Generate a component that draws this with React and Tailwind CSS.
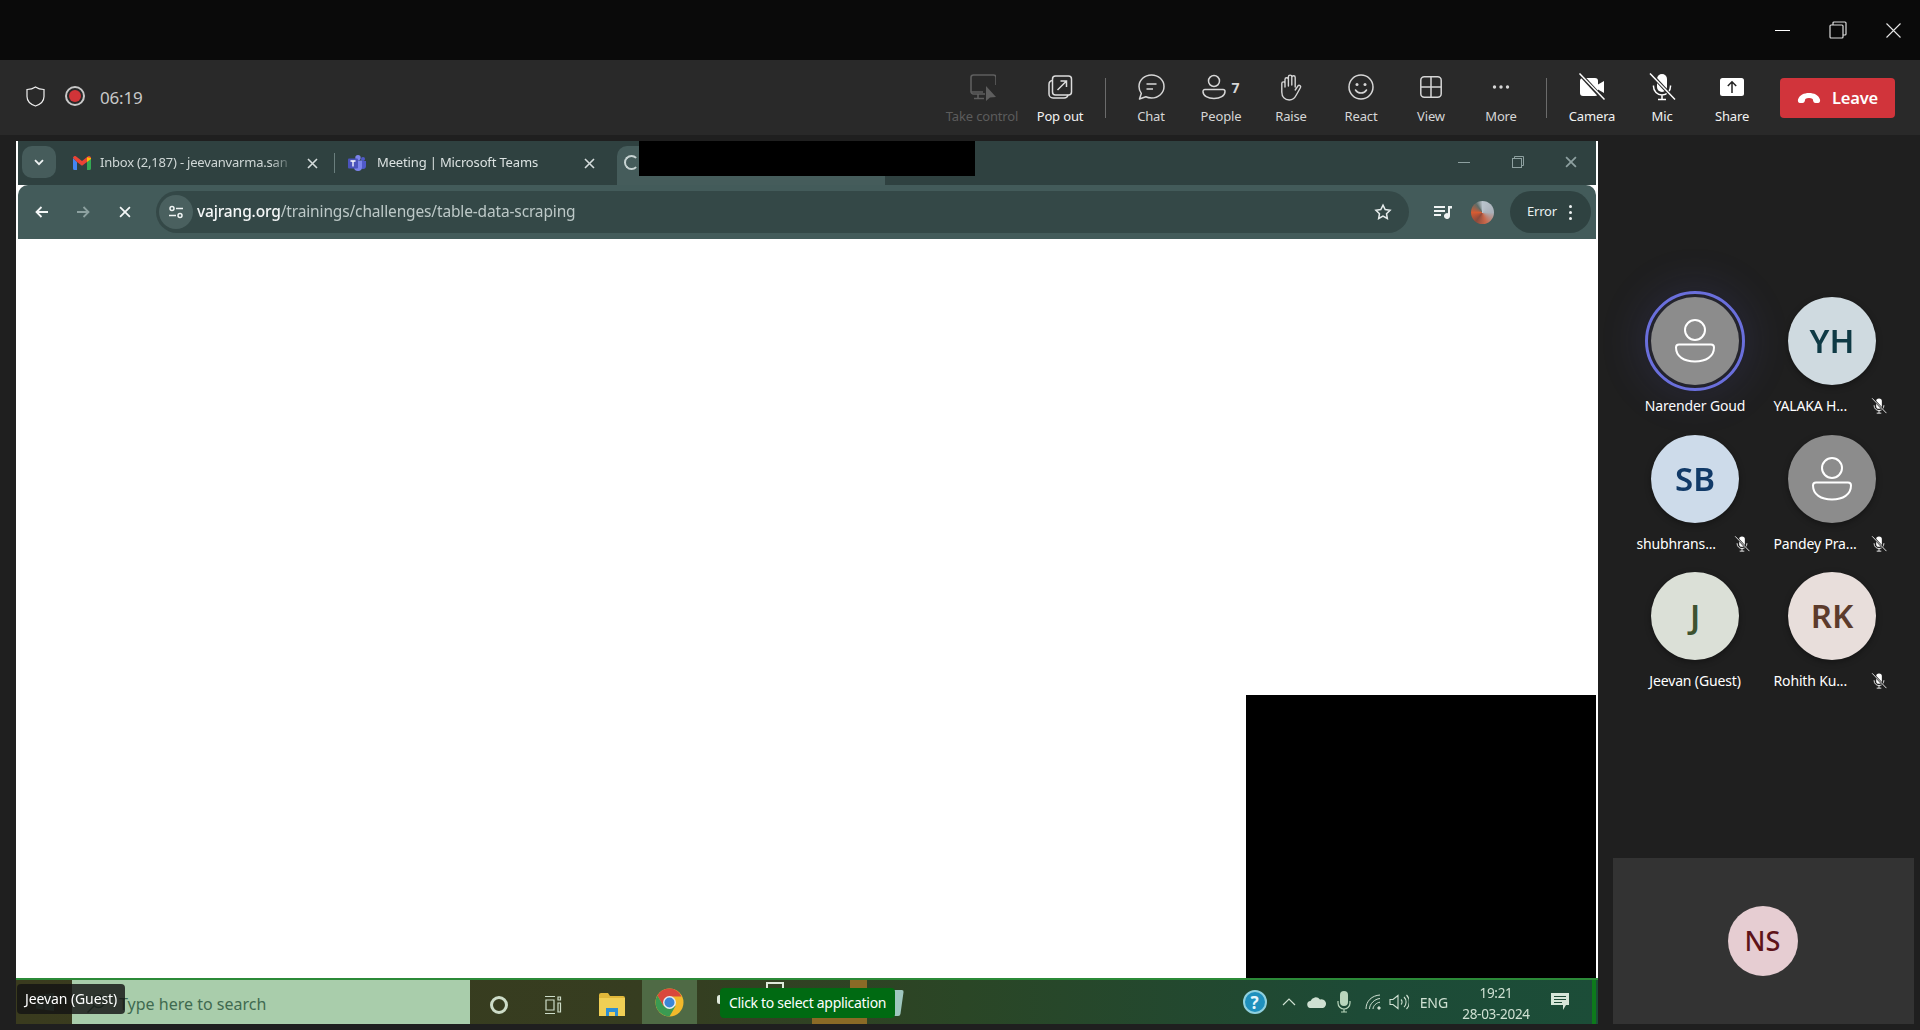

const FONT = { fontFamily: '"Noto Sans", "Open Sans", sans-serif' };

const Svg = ({ s = 28, vb, className = "", children }) => (
  <svg width={s} height={s} viewBox={vb || `0 0 ${s} ${s}`} fill="none" className={className}>{children}</svg>
);

const IconTakeControl = () => (
  <Svg>
    <path d="M17 21H5.500A2.500 2.500 0 0 1 3 18.500V4.500A2.500 2.500 0 0 1 5.500 2h20A2.500 2.500 0 0 1 28 4.500V12" stroke="#5e5e5e" strokeWidth="1.600" />
    <path d="M3 19h12M10 21v4M6 25.500h10" stroke="#5e5e5e" strokeWidth="1.600" />
    <path d="M18 13l10 11-6 .5L18 28z" fill="#5e5e5e" />
  </Svg>
);
const IconPopOut = () => (
  <Svg>
    <rect x="6.500" y="3" width="19" height="19" rx="3" stroke="#dcdcdc" strokeWidth="1.500" />
    <path d="M6.500 7.500A4 4 0 0 0 3 11.500V21a4 4 0 0 0 4 4h11a4 4 0 0 0 4-3.200" stroke="#dcdcdc" strokeWidth="1.500" />
    <path d="M11.500 17l8.500-8.500M14.500 8H20.500V14" stroke="#dcdcdc" strokeWidth="1.500" />
  </Svg>
);
const IconChat = () => (
  <Svg>
    <path d="M14.500 2C21.400 2 27 7 27 13.500S21.400 25 14.500 25c-2 0-4-.4-5.700-1.200L2.500 26l1.800-5.600A11.300 11.300 0 0 1 2 13.500C2 7 7.600 2 14.500 2Z" stroke="#d6d6d6" strokeWidth="1.500" strokeLinejoin="round" />
    <path d="M9.500 11h10M9.500 16h6.500" stroke="#d6d6d6" strokeWidth="1.500" />
  </Svg>
);
const IconPeople = () => (
  <svg width="24" height="26" viewBox="0 0 24 26" fill="none">
    <circle cx="12" cy="7" r="5.500" stroke="#d6d6d6" strokeWidth="1.500" />
    <path d="M3 15.500h18a2 2 0 0 1 2 2c0 4.500-5 7-11 7s-11-2.500-11-7a2 2 0 0 1 2-2Z" stroke="#d6d6d6" strokeWidth="1.500" />
  </svg>
);
const IconHand = () => (
  <Svg>
    <path d="M8 14V6.500a1.700 1.700 0 0 1 3.400 0V13M11.400 12V3.800a1.700 1.700 0 0 1 3.400 0V12M14.800 12V4.500a1.700 1.700 0 0 1 3.400 0V14M8 14v-3.500a1.600 1.600 0 0 0-3.200 0V19c0 5 3 8 7.500 8 3.500 0 5.500-2 7-5l4.200-7.500c.8-1.500-1.300-3-2.500-1.700L18.200 17" stroke="#d6d6d6" strokeWidth="1.400" strokeLinecap="round" strokeLinejoin="round" />
  </Svg>
);
const IconSmile = () => (
  <Svg>
    <circle cx="14" cy="14" r="12" stroke="#d6d6d6" strokeWidth="1.500" />
    <circle cx="10" cy="11.500" r="1.500" fill="#d6d6d6" />
    <circle cx="18" cy="11.500" r="1.500" fill="#d6d6d6" />
    <path d="M8.500 17c1.200 2 3.200 3 5.500 3s4.300-1 5.500-3" stroke="#d6d6d6" strokeWidth="1.500" strokeLinecap="round" />
  </Svg>
);
const IconView = () => (
  <Svg>
    <rect x="3.800" y="3.800" width="20.400" height="20.400" rx="3.500" stroke="#d6d6d6" strokeWidth="1.500" />
    <path d="M14 4v20M4 14h20" stroke="#d6d6d6" strokeWidth="1.500" />
  </Svg>
);
const IconMore = () => (
  <Svg>
    <circle cx="7.500" cy="14" r="1.700" fill="#d6d6d6" />
    <circle cx="14" cy="14" r="1.700" fill="#d6d6d6" />
    <circle cx="20.500" cy="14" r="1.700" fill="#d6d6d6" />
  </Svg>
);
const IconCamera = () => (
  <Svg>
    <rect x="2" y="5" width="18" height="18" rx="3" fill="#fff" />
    <path d="M20 11.500l6-3.500v12l-6-3.500z" fill="#fff" />
    <path d="M2 1l24 26" stroke="#292929" strokeWidth="4" />
    <path d="M1.500 .5l25 26" stroke="#fff" strokeWidth="1.500" />
  </Svg>
);
const MicSlash = ({ s = 28, cut = "#292929" }) => (
  <svg width={s} height={s} viewBox="0 0 28 28" fill="none" className="shrink-0">
    <rect x="9" y="1" width="10" height="18" rx="5" fill="#fff" />
    <path d="M5.500 12.500v1a8.500 8.500 0 0 0 17 0v-1M14 22v4.500M10 26.500h8" stroke="#fff" strokeWidth="1.500" />
    <path d="M3 1l24 26" stroke={cut} strokeWidth="3.500" />
    <path d="M2 .5l25 26" stroke="#fff" strokeWidth="1.500" />
  </svg>
);
const IconShare = () => (
  <Svg>
    <rect x="2" y="5" width="24" height="18" rx="2.500" fill="#fff" />
    <path d="M14 20V9M9.800 13L14 8.800 18.200 13" stroke="#222" strokeWidth="1.500" />
  </Svg>
);
const IconHang = () => (
  <svg width="24" height="12" viewBox="0 0 24 12">
    <path d="M1 7.500C2.500 3 7 1 12 1s9.500 2 11 6.500c.5 1.800-.4 3.500-2 3.500h-2.500c-1.300 0-2-.8-2.300-2l-.5-2c-1-.7-2.200-1-3.700-1s-2.700.3-3.700 1l-.5 2c-.3 1.200-1 2-2.300 2H3C1.400 11 .5 9.300 1 7.500Z" fill="#fff" />
  </svg>
);

const Btn = ({ label, w = "w-[70px]", muted, bright, children }) => (
  <div className={`flex flex-col items-center pt-[13px] ${w}`}>
    <div className="flex h-[28px] items-center justify-center">{children}</div>
    <div className={`mt-[7px] whitespace-nowrap text-[13px] leading-[16px] tracking-[-0.15px] ${muted ? "text-[#5c5c5c]" : bright ? "text-[#f2f2f2]" : "text-[#d6d6d6]"}`}>{label}</div>
  </div>
);

const Divider = ({ className }) => <div className={`mt-[18px] h-[40px] w-px bg-[#6b6b6b] ${className}`} />;

const Person = ({ s = 88 }) => (
  <svg width={s} height={s} viewBox="-44 -44 88 88" fill="none" stroke="#fff" strokeWidth="2">
    <circle cx="0" cy="-11" r="10" />
    <path d="M-16 3.500h32a3 3 0 0 1 3 3c0 9-8 14-19 14s-19-5-19-14a3 3 0 0 1 3-3Z" />
  </svg>
);

const Avatar = ({ bg, color, text, speaking }) => (
  <div className={`relative flex h-[88px] w-[88px] items-center justify-center rounded-full text-[33px] font-semibold ${speaking ? "shadow-[0_0_40px_14px_rgba(91,95,199,0.13)]" : "shadow-[0_2px_6px_rgba(0,0,0,0.35)]"}`} style={{ background: bg, color }}>
    {text || <Person />}
    {speaking && <div className="absolute -inset-[6px] rounded-full border-[3px] border-[#6a6fdc]" />}
  </div>
);

const Cell = ({ name, muted, ...a }) => (
  <div className="flex h-[137.5px] w-[137px] flex-col items-center">
    <Avatar {...a} />
    <div className={`mt-[11px] flex h-[20px] w-full items-center text-[14px] leading-[20px] tracking-[-0.15px] text-white ${muted ? "justify-between pl-[10px] pr-[14px]" : "justify-center"}`}>
      <span className="whitespace-nowrap">{name}</span>
      {muted && <MicSlash s={16} cut="#1f1f1f" />}
    </div>
  </div>
);

const TabX = ({ className, color = "#d5dcdc", s = 11 }) => (
  <svg width={s} height={s} viewBox="0 0 11 11" className={className}>
    <path d="M1 1l9 9M10 1l-9 9" stroke={color} strokeWidth="1.600" />
  </svg>
);

const Gmail = () => (
  <svg width="18" height="14" viewBox="0 0 18 14" className="shrink-0">
    <path d="M0 2v10.500A1.500 1.500 0 0 0 1.500 14H4V6z" fill="#4285f4" />
    <path d="M14 6v8h2.500a1.500 1.500 0 0 0 1.500-1.500V2z" fill="#34a853" />
    <path d="M0 2a2 2 0 0 1 3.200-1.600L9 5l5.800-4.600A2 2 0 0 1 18 2L14 6 9 9.800 4 6z" fill="#ea4335" />
    <path d="M14 1.200 18 2v1l-4 3z" fill="#fbbc04" />
  </svg>
);
const Teams = () => (
  <svg width="18" height="16" viewBox="0 0 18 16" className="shrink-0">
    <circle cx="10" cy="2.700" r="2.700" fill="#7b83eb" />
    <circle cx="15" cy="4" r="2" fill="#5059c9" />
    <path d="M12 6h6v5a3 3 0 0 1-6 0z" fill="#5059c9" />
    <path d="M6 5.500h8V12a4 4 0 0 1-8 0z" fill="#7b83eb" />
    <rect x="0" y="3.500" width="10" height="10" rx="1" fill="#4b53bc" />
    <path d="M2.500 6h5M5 6v5.500" stroke="#fff" strokeWidth="1.300" />
  </svg>
);

const ChromeLogo = () => (
  <svg width="29" height="29" viewBox="-14.500 -14.500 29 29">
    <circle r="14" fill="#f2b92b" />
    <path d="M0-14A14 14 0 0 0-12.100-7L-6 3.500-0-6H12.100A14 14 0 0 0 0-14Z" fill="#d9483b" />
    <path d="M-12.100-7A14 14 0 0 0 0 14L6 3.500H-6Z" fill="#3b9a52" />
    <circle r="6.500" fill="#e9eef0" />
    <circle r="5" fill="#3d86d6" />
  </svg>
);

function ChromeArea() {
  return (
    <div className="relative mx-[2px] w-[1578px] blur-[0.3px]">
      <div className="flex h-[44px] items-start bg-[#2f4140] pt-[5px]">
        <div className="ml-[4px] flex h-[32px] w-[34px] items-center justify-center rounded-[10px] bg-[#465c5b]">
          <svg width="10" height="7" viewBox="0 0 10 7"><path d="M1 1.200l4 4 4-4" stroke="#eef2f2" strokeWidth="1.800" fill="none" /></svg>
        </div>
        <div className="ml-[17px] flex h-[34px] w-[256px] items-center">
          <Gmail />
          <span className="ml-[9px] w-[194px] overflow-hidden whitespace-nowrap text-[13px] tracking-[-0.2px] text-[#cfd7d6] [mask-image:linear-gradient(90deg,#000_88%,transparent)]">Inbox (2,187) - jeevanvarma.san</span>
          <TabX className="ml-[13px]" />
        </div>
        <div className="ml-[5px] mt-[7px] h-[20px] w-px bg-[#6a7e7d]" />
        <div className="ml-[13px] flex h-[34px] items-center">
          <Teams />
          <span className="ml-[11px] w-[207px] whitespace-nowrap text-[13px] tracking-[-0.15px] text-[#dbe2e1]">Meeting | Microsoft Teams</span>
          <TabX />
        </div>
        <div className="ml-[22px] flex h-[39px] w-[268px] items-start rounded-t-[10px] bg-[#455c5b] pl-[7px] pt-[9px]">
          <div className="h-[15px] w-[15px] rounded-full border-2 border-[#c8d4d3] border-r-transparent" />
        </div>
        <div className="ml-auto flex h-[32px] items-center pr-[19px]">
          <div className="h-px w-[12px] bg-[#8ea0a0]" />
          <svg width="12" height="12" viewBox="0 0 12 12" fill="none" stroke="#8ea0a0" className="ml-[42px]"><rect x=".5" y="2.500" width="9" height="9" /><path d="M2.500 2.500V.5h9v9h-2" /></svg>
          <TabX className="ml-[41px]" color="#8ea0a0" s={12} />
        </div>
      </div>
      <div className="flex h-[54px] items-center rounded-t-[10px] bg-[#435b5a] text-[#eef2f2]">
        <svg width="14" height="12" viewBox="0 0 14 12" className="ml-[17px]"><path d="M13 6H2M6.500 1 1.500 6l5 5" stroke="#f4f7f7" strokeWidth="1.800" fill="none" /></svg>
        <svg width="14" height="12" viewBox="0 0 14 12" className="ml-[27px]"><path d="M1 6h11M7.500 1l5 5-5 5" stroke="#8da1a0" strokeWidth="1.800" fill="none" /></svg>
        <TabX className="ml-[29px]" color="#f4f7f7" s={12} />
        <div className="ml-[25px] flex h-[42px] w-[1253px] items-center rounded-full bg-[#344847]">
          <div className="ml-[3px] flex h-[34px] w-[34px] items-center justify-center rounded-full bg-[#4a605f]">
            <svg width="16" height="14" viewBox="0 0 16 14" fill="none" stroke="#f0f4f4" strokeWidth="1.500"><circle cx="4" cy="3.500" r="2" /><path d="M8 3.500h7M1 10.500h7" /><circle cx="12" cy="10.500" r="2" /></svg>
          </div>
          <span className="ml-[4px] whitespace-nowrap text-[15.500px] tracking-[-0.15px]"><span className="font-medium text-[#f4f7f7]">vajrang.org</span><span className="text-[#bcc8c7]">/trainings/challenges/table-data-scraping</span></span>
          <svg width="18" height="18" viewBox="0 0 24 24" fill="none" stroke="#e6ecec" strokeWidth="2" className="ml-auto mr-[17px]"><path d="M12 2.800l2.900 6 6.500.9-4.700 4.500 1.100 6.500L12 17.600l-5.800 3.100 1.100-6.500L2.600 9.700l6.500-.9z" /></svg>
        </div>
        <svg width="18" height="14" viewBox="0 0 18 14" className="ml-[25px]" fill="#f0f4f4"><rect y="1" width="11" height="2" /><rect y="5" width="11" height="2" /><rect y="9" width="7" height="2" /><path d="M14 1h4v2.500h-2V11a3 3 0 1 1-2-2.800z" /></svg>
        <div className="ml-[19px] h-[23px] w-[23px] rounded-full bg-[conic-gradient(#b9c3cc,#aab1ba_25%,#c9674a_45%,#8d4a3b_60%,#d65b32_75%,#5f6b66_90%,#b9c3cc)]" />
        <div className="ml-[16px] flex h-[42px] w-[81px] items-center rounded-full bg-[#2f4241] pl-[17px] text-[13px] tracking-[-0.2px] text-[#eaf0f0]">
          Error
          <div className="ml-[12px] flex flex-col gap-[3px]">
            <div className="h-[3px] w-[3px] rounded-full bg-[#f0f4f4]" />
            <div className="h-[3px] w-[3px] rounded-full bg-[#f0f4f4]" />
            <div className="h-[3px] w-[3px] rounded-full bg-[#f0f4f4]" />
          </div>
        </div>
      </div>
    </div>
  );
}

function Taskbar() {
  return (
    <div className="relative flex h-[46px] border-t-2 border-[#2b8a38] bg-[linear-gradient(90deg,#3a3b1e_0%,#363d20_40%,#2a4626_60%,#1d4a36_85%,#1c4d38_100%)] blur-[0.25px]">
      <div className="flex w-[56px] items-center pl-[20px]">
        <svg width="18" height="18" viewBox="0 0 18 18" fill="#56705c"><path d="M0 2.500 7.500 1.500V8.500H0zM8.500 1.300 18 0V8.500H8.500zM0 9.500h7.500v7L0 15.500zM8.500 9.500H18V18l-9.500-1.300z" /></svg>
      </div>
      <div className="flex w-[398px] items-center bg-[#a9cdab] pl-[14px] pt-[4px] text-[16px] text-[#3f6a50]">
        <svg width="20" height="20" viewBox="0 0 20 20" fill="none" stroke="#3f6a50" strokeWidth="1.500"><circle cx="12.500" cy="7.500" r="6" /><path d="M8 12 1.500 18.500" /></svg>
        <span className="ml-[13px] whitespace-nowrap">Type here to search</span>
      </div>
      <div className="ml-[20px] mt-[16px] h-[18px] w-[18px] rounded-full border-[3px] border-[#cddcc8]" />
      <svg width="18" height="18" viewBox="0 0 18 18" fill="none" stroke="#cddcc8" strokeWidth="1.200" className="ml-[36px] mt-[16px]"><path d="M1 .5h10M1 17.500h10M2 4h8v10H2zM14 1h2.500v3H14zM14 7h2.500v9H14z" /></svg>
      <svg width="26" height="23" viewBox="0 0 26 23" className="ml-[37px] mt-[13px]"><path d="M0 2a2 2 0 0 1 2-2h7l2 3h13a2 2 0 0 1 2 2v1H0z" fill="#e0b83a" /><rect y="5" width="26" height="18" fill="#f0cf55" /><path d="M7 23v-8h12v8h-3v-4h-6v4z" fill="#2c8fd6" /></svg>
      <div className="ml-[17px] flex h-[44px] w-[55px] items-center justify-center bg-[#4f6a45]"><ChromeLogo /></div>
      <div className="ml-auto flex items-center pr-[29px] text-[#cfe0d2]">
        <div className="flex h-[24px] w-[24px] items-center justify-center rounded-full border-[2px] border-[#8fd0de] bg-[#1f90bd] text-[17px] font-bold leading-none text-[#e7f6fa]">?</div>
        <svg width="14" height="8" viewBox="0 0 14 8" fill="none" stroke="#cfe0d2" strokeWidth="1.200" className="ml-[15px]"><path d="M1 7l6-6 6 6" /></svg>
        <svg width="20" height="12" viewBox="0 0 20 12" fill="#cfe0d2" className="ml-[11px]"><path d="M4 12a3.500 3.500 0 0 1-.5-7A5.500 5.500 0 0 1 13 3.500 4.200 4.200 0 0 1 16 12z" /></svg>
        <svg width="14" height="22" viewBox="0 0 14 22" className="ml-[10px]" fill="none"><rect x="3" y="0" width="8" height="15" rx="4" fill="#b9d6bc" /><path d="M1 10v2a6 6 0 0 0 12 0v-2M7 18v3M4 21h6" stroke="#b9d6bc" strokeWidth="1.200" /></svg>
        <svg width="16" height="16" viewBox="0 0 16 16" fill="none" stroke="#cfe0d2" strokeWidth="1" className="ml-[14px]"><path d="M1 15C1 7 7 1.500 15 1M4.500 15c0-5 5-10 10.500-10.500M8 15c0-3 3.500-6.500 7-6.800" /><circle cx="14" cy="14" r="1.200" fill="#cfe0d2" /></svg>
        <svg width="20" height="16" viewBox="0 0 20 16" fill="none" stroke="#cfe0d2" strokeWidth="1.100" className="ml-[8px]"><path d="M1 5.500h3L9 1.500v13L4 10.500H1zM12 5.500a3.500 3.500 0 0 1 0 5M15 3a7 7 0 0 1 0 10M17.500 1a10 10 0 0 1 0 14" /></svg>
        <span className="ml-[11px] text-[14px] tracking-[-0.1px]">ENG</span>
        <div className="ml-[14px] flex w-[68px] flex-col items-center pt-[3px] text-[13.500px] leading-[21px] tracking-[-0.3px]"><span>19:21</span><span>28-03-2024</span></div>
        <svg width="18" height="18" viewBox="0 0 18 18" className="ml-[21px]"><path d="M0 0h18v12h-3l-3 5v-5H0z" fill="#d6e6d8" /><path d="M3 3.500h12M3 6.500h12M3 9.500h8" stroke="#1d4a36" strokeWidth="1" /></svg>
      </div>
      <div className="absolute inset-y-0 right-[2px] w-[4px] bg-[#0d7a1b]" />
      <div className="absolute left-[750px] top-[2px] h-[10px] w-[18px] border-2 border-b-0 border-[#dfe9dc]" />
      <div className="absolute left-[834px] top-0 h-[8px] w-[17px] bg-[#8a6a26]" />
      <div className="absolute bottom-0 left-[796px] h-[8px] w-[55px] bg-[#8a6a26]" />
      <div className="absolute left-[701px] top-[15px] h-[9px] w-[5px] rounded-sm bg-[#dfe9dc]" />
      <div className="absolute left-[872px] top-[10px] h-[26px] w-[14px] skew-x-[-8deg] rounded-[2px] bg-[#9fc7bf]" />
    </div>
  );
}

export default function App() {
  return (
    <div style={FONT} className="flex h-[1030px] w-[1920px] flex-col overflow-hidden bg-[#1f1f1f]">
      <div className="flex h-[60px] items-center bg-[#0a0a0a] pr-[19px]">
        <div className="ml-auto h-px w-[15px] bg-white" />
        <svg width="18" height="18" viewBox="0 0 18 18" fill="none" stroke="#dcdcdc" strokeWidth="1.200" className="ml-[39px]"><rect x="1" y="4" width="13" height="13" rx="1" /><path d="M4 4V2a1 1 0 0 1 1-1h11a1 1 0 0 1 1 1v11a1 1 0 0 1-1 1h-2" /></svg>
        <svg width="15" height="15" viewBox="0 0 15 15" stroke="#e6e6e6" strokeWidth="1.100" className="ml-[39px]"><path d="M.5.500l14 14M14.500.500l-14 14" /></svg>
      </div>
      <div className="flex h-[75px] bg-[#292929] pr-[25px]">
        <div className="ml-[26px] mt-[26px] flex items-start">
          <svg width="19" height="21" viewBox="0 0 19 21" fill="none" stroke="#f0f0f0" strokeWidth="1.200"><path d="M9.500 1C7 2.800 4.500 3.500 1 3.500v7c0 4.500 3.500 7.800 8.500 9.500 5-1.700 8.500-5 8.500-9.500v-7c-3.500 0-6-.7-8.500-2.500Z" /></svg>
          <div className="ml-[20px] flex h-[20px] w-[20px] items-center justify-center rounded-full border-2 border-[#c8c8c8]"><div className="h-[12px] w-[12px] rounded-full bg-[#d13438]" /></div>
          <span className="ml-[15px] mt-[2px] text-[17px] leading-[20px] tracking-[-0.2px] text-[#c8c8c8]">06:19</span>
        </div>
        <div className="ml-auto flex items-start">
          <Btn label="Take control" w="w-[78px]" muted><IconTakeControl /></Btn>
          <Btn label="Pop out" w="w-[78px]" bright><IconPopOut /></Btn>
          <Divider className="ml-[6px]" />
          <Btn label="Chat" w="w-[70px] ml-[10px]"><IconChat /></Btn>
          <Btn label="People">
            <div className="flex items-center">
              <IconPeople />
              <span className="ml-[5px] text-[14px] font-bold text-[#d6d6d6]">7</span>
            </div>
          </Btn>
          <Btn label="Raise"><IconHand /></Btn>
          <Btn label="React"><IconSmile /></Btn>
          <Btn label="View"><IconView /></Btn>
          <Btn label="More"><IconMore /></Btn>
          <Divider className="ml-[10px]" />
          <Btn label="Camera" w="w-[70px] ml-[10px]" bright><IconCamera /></Btn>
          <Btn label="Mic" w="w-[70px]" bright><MicSlash /></Btn>
          <Btn label="Share" w="w-[70px]" bright><IconShare /></Btn>
          <div className="ml-[13px] mt-[18px] flex h-[40px] w-[115px] items-center justify-center rounded-[4px] bg-[#d1343b] text-[16.500px] font-semibold tracking-[-0.2px] text-white">
            <IconHang />
            <span className="ml-[11px]">Leave</span>
          </div>
        </div>
      </div>
      <div className="flex flex-1">
        <div className="relative ml-[16px] mt-[6px] flex h-[883px] w-[1582px] flex-col bg-white">
          <ChromeArea />
          <div className="flex-1" />
          <Taskbar />
          <div className="absolute left-[623px] top-0 h-[35px] w-[336px] bg-black" />
          <div className="absolute bottom-[46px] right-[2px] h-[283px] w-[350px] bg-black" />
          <div className="absolute bottom-[10px] left-[1px] rounded-[4px] bg-[rgba(20,20,20,0.82)] px-[8px] py-[4px] text-[14px] leading-[22px] tracking-[-0.1px] text-white">Jeevan (Guest)</div>
          <div className="absolute bottom-[6px] left-[704px] rounded-[4px] bg-[#006a12] px-[9px] py-[4px] text-[14px] leading-[22px] tracking-[-0.3px] text-white">Click to select application</div>
        </div>
        <div className="flex flex-1 flex-col">
          <div className="ml-[10px] flex flex-1 flex-col bg-[#1f1f1f] pb-[6px] pl-[5px] pr-[6px]">
            <div className="ml-[13.500px] mt-[162px] grid w-[274px] grid-cols-2">
              <Cell name="Narender Goud" bg="#8c8c8c" speaking />
              <Cell name="YALAKA H..." bg="#cfdae0" color="#0f3a45" text="YH" muted />
              <Cell name="shubhrans..." bg="#cddbea" color="#113a68" text="SB" muted />
              <Cell name="Pandey Pra..." bg="#8c8c8c" muted />
              <Cell name="Jeevan (Guest)" bg="#dbe0d7" color="#3e5230" text="J" />
              <Cell name="Rohith Ku..." bg="#e8dedb" color="#5c3b2c" text="RK" muted />
            </div>
            <div className="mt-auto flex h-[166px] items-center justify-center bg-[#333333] pr-[2px]">
              <div className="flex h-[70px] w-[70px] items-center justify-center rounded-full bg-[#e6cdd2] text-[27px] font-medium text-[#5e1319]">NS</div>
            </div>
          </div>
        </div>
      </div>
    </div>
  );
}
